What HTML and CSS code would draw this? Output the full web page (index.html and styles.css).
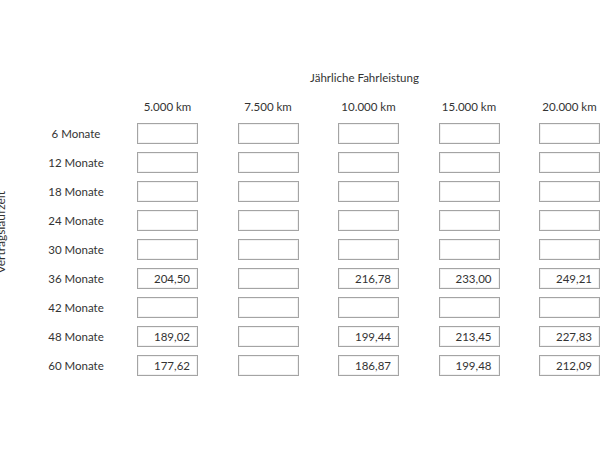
FILE: index.html
```html
<!DOCTYPE html>
<html lang="de">
<head>
<meta charset="utf-8">
<title>Leasingraten</title>
<link rel="stylesheet" href="styles.css">
</head>
<body>
<div class="page">
  <div class="axis-col">
    <div class="axis">Vertragslaufzeit</div>
  </div>
  <div class="main">
    <div class="title">Jährliche Fahrleistung</div>

    <div class="row head-row">
      <div class="corner"></div>
      <div class="head">5.000 km</div>
      <div class="head">7.500 km</div>
      <div class="head">10.000 km</div>
      <div class="head">15.000 km</div>
      <div class="head">20.000 km</div>
    </div>

    <div class="row">
      <div class="label">6 Monate</div>
      <div class="cell"><input class="box" value=""></div>
      <div class="cell"><input class="box" value=""></div>
      <div class="cell"><input class="box" value=""></div>
      <div class="cell"><input class="box" value=""></div>
      <div class="cell"><input class="box" value=""></div>
    </div>

    <div class="row">
      <div class="label">12 Monate</div>
      <div class="cell"><input class="box" value=""></div>
      <div class="cell"><input class="box" value=""></div>
      <div class="cell"><input class="box" value=""></div>
      <div class="cell"><input class="box" value=""></div>
      <div class="cell"><input class="box" value=""></div>
    </div>

    <div class="row">
      <div class="label">18 Monate</div>
      <div class="cell"><input class="box" value=""></div>
      <div class="cell"><input class="box" value=""></div>
      <div class="cell"><input class="box" value=""></div>
      <div class="cell"><input class="box" value=""></div>
      <div class="cell"><input class="box" value=""></div>
    </div>

    <div class="row">
      <div class="label">24 Monate</div>
      <div class="cell"><input class="box" value=""></div>
      <div class="cell"><input class="box" value=""></div>
      <div class="cell"><input class="box" value=""></div>
      <div class="cell"><input class="box" value=""></div>
      <div class="cell"><input class="box" value=""></div>
    </div>

    <div class="row">
      <div class="label">30 Monate</div>
      <div class="cell"><input class="box" value=""></div>
      <div class="cell"><input class="box" value=""></div>
      <div class="cell"><input class="box" value=""></div>
      <div class="cell"><input class="box" value=""></div>
      <div class="cell"><input class="box" value=""></div>
    </div>

    <div class="row">
      <div class="label">36 Monate</div>
      <div class="cell"><input class="box" value="204,50"></div>
      <div class="cell"><input class="box" value=""></div>
      <div class="cell"><input class="box" value="216,78"></div>
      <div class="cell"><input class="box" value="233,00"></div>
      <div class="cell"><input class="box" value="249,21"></div>
    </div>

    <div class="row">
      <div class="label">42 Monate</div>
      <div class="cell"><input class="box" value=""></div>
      <div class="cell"><input class="box" value=""></div>
      <div class="cell"><input class="box" value=""></div>
      <div class="cell"><input class="box" value=""></div>
      <div class="cell"><input class="box" value=""></div>
    </div>

    <div class="row">
      <div class="label">48 Monate</div>
      <div class="cell"><input class="box" value="189,02"></div>
      <div class="cell"><input class="box" value=""></div>
      <div class="cell"><input class="box" value="199,44"></div>
      <div class="cell"><input class="box" value="213,45"></div>
      <div class="cell"><input class="box" value="227,83"></div>
    </div>

    <div class="row">
      <div class="label">60 Monate</div>
      <div class="cell"><input class="box" value="177,62"></div>
      <div class="cell"><input class="box" value=""></div>
      <div class="cell"><input class="box" value="186,87"></div>
      <div class="cell"><input class="box" value="199,48"></div>
      <div class="cell"><input class="box" value="212,09"></div>
    </div>
  </div>
</div>
</body>
</html>
```

FILE: styles.css
```css
html, body {
  margin: 0;
  padding: 0;
  background: #ffffff;
}

body {
  font-family: "Lato", "Liberation Sans", sans-serif;
  font-size: 11.5px;
  color: #333333;
  width: 600px;
  height: 450px;
  overflow: hidden;
}

.page {
  display: flex;
  padding-top: 70px;
}

.axis-col {
  width: 15px;
  flex: 0 0 15px;
}

.axis {
  margin-top: 121px;
  margin-left: -7px;
  width: 15px;
  font-size: 12px;
  writing-mode: vertical-rl;
  transform: rotate(180deg);
  line-height: 15px;
  white-space: nowrap;
}

.main {
  flex: 0 0 585px;
}

.title {
  margin-left: 122px;
  width: 463px;
  text-align: center;
  line-height: 16px;
  height: 16px;
  padding-right: 8px;
  box-sizing: border-box;
  margin-bottom: 13px;
}

.row {
  display: grid;
  grid-template-columns: 122px 100.5px 100.5px 100.5px 100.5px 61px;
  height: 29px;
}

.head-row {
  height: 20px;
}

.head {
  width: 61px;
  text-align: center;
  line-height: 16px;
  height: 16px;
  white-space: nowrap;
}

.label {
  text-align: center;
  line-height: 29px;
  white-space: nowrap;
}

.cell {
  padding-top: 4px;
}

.box {
  display: block;
  box-sizing: border-box;
  width: 61px;
  height: 21px;
  margin: 0;
  padding: 0 7px 0 4px;
  border: 1px solid #a4a4a4;
  border-radius: 0;
  background: #ffffff;
  box-shadow: inset 0 0 0 1px #f2f2f2;
  font-family: "Lato", "Liberation Sans", sans-serif;
  font-size: 11.5px;
  color: #333333;
  text-align: right;
  outline: none;
}
```
